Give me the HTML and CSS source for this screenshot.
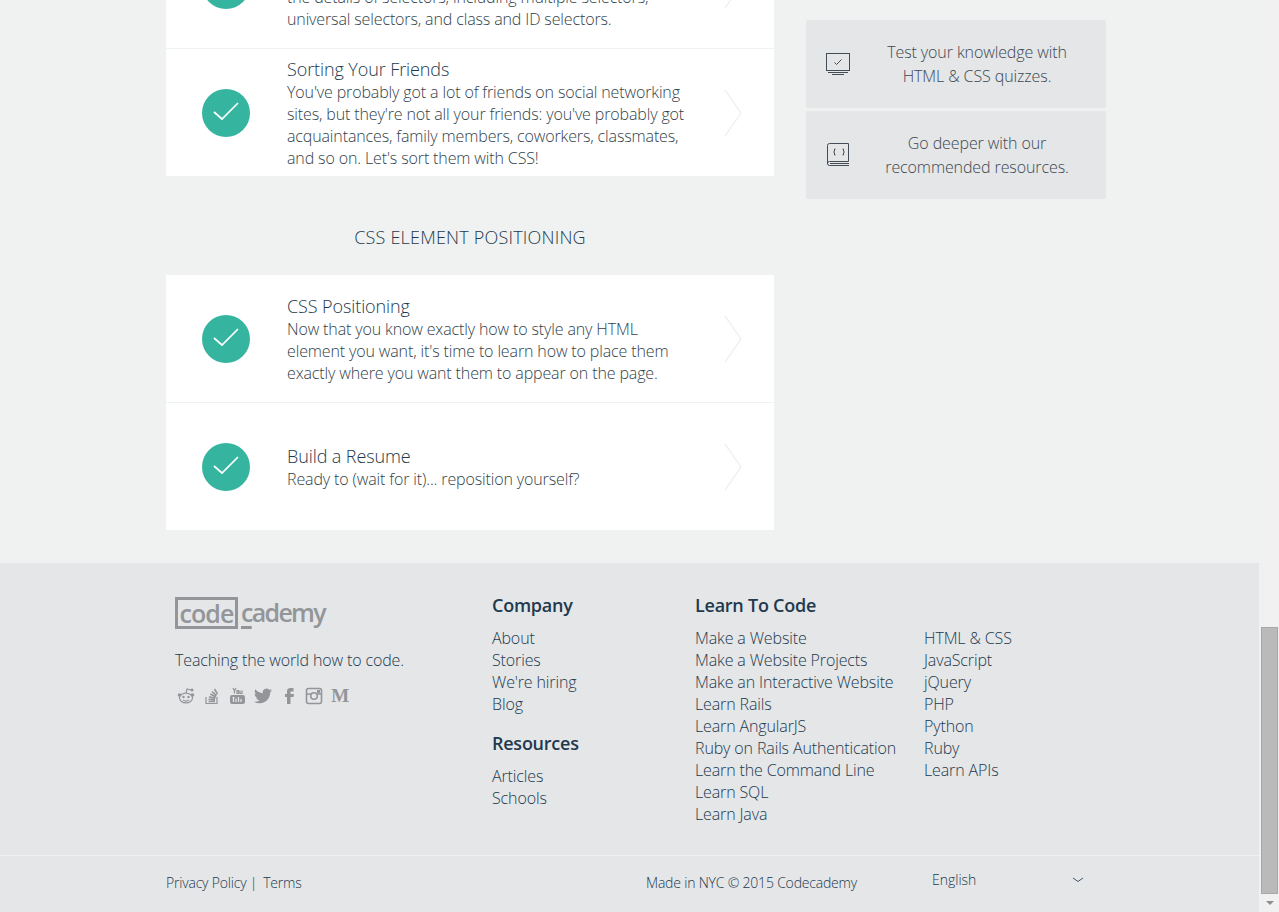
FILE: index.html
```html
<!DOCTYPE html>
<html lang="en">
<head>
    <meta charset="UTF-8">
    <meta name="viewport" content="width=device-width, initial-scale=1.0">
    <title>HTML &amp; CSS | Codecademy</title>
    <link rel="stylesheet" href="styles.css">
</head>
<body>

<div class="window">
    <div class="page">
        <div class="content">
            <div class="lessons">
                <div class="card">
                    <div class="lesson">
                        <span class="done"><svg viewBox="0 0 48 48"><path d="M12 23l8 7 16-16"/></svg></span>
                        <div class="lesson-text">
                            <h3>CSS Selectors</h3>
                            <p>Let's take a closer look at CSS and learn<br>the details of selectors, including multiple selectors,<br>universal selectors, and class and ID selectors.</p>
                        </div>
                        <svg class="chevron" viewBox="0 0 20 48"><path d="M2 1l16 23L2 47"/></svg>
                    </div>
                    <div class="lesson">
                        <span class="done"><svg viewBox="0 0 48 48"><path d="M12 23l8 7 16-16"/></svg></span>
                        <div class="lesson-text">
                            <h3>Sorting Your Friends</h3>
                            <p>You've probably got a lot of friends on social networking<br>sites, but they're not all your friends: you've probably got<br>acquaintances, family members, coworkers, classmates,<br>and so on. Let's sort them with CSS!</p>
                        </div>
                        <svg class="chevron" viewBox="0 0 20 48"><path d="M2 1l16 23L2 47"/></svg>
                    </div>
                </div>

                <h2>CSS ELEMENT POSITIONING</h2>

                <div class="card">
                    <div class="lesson">
                        <span class="done"><svg viewBox="0 0 48 48"><path d="M12 23l8 7 16-16"/></svg></span>
                        <div class="lesson-text">
                            <h3>CSS Positioning</h3>
                            <p>Now that you know exactly how to style any HTML<br>element you want, it's time to learn how to place them<br>exactly where you want them to appear on the page.</p>
                        </div>
                        <svg class="chevron" viewBox="0 0 20 48"><path d="M2 1l16 23L2 47"/></svg>
                    </div>
                    <div class="lesson">
                        <span class="done"><svg viewBox="0 0 48 48"><path d="M12 23l8 7 16-16"/></svg></span>
                        <div class="lesson-text">
                            <h3>Build a Resume</h3>
                            <p>Ready to (wait for it)... reposition yourself?</p>
                        </div>
                        <svg class="chevron" viewBox="0 0 20 48"><path d="M2 1l16 23L2 47"/></svg>
                    </div>
                </div>
            </div>

            <div class="sidebar">
                <a class="extra">
                    <svg class="extra-icon" viewBox="0 0 26 26">
                        <rect x="0.500" y="2.500" width="23" height="17"/>
                        <path d="M8.500 11.500l2 2 5-5"/>
                        <path d="M2 21.500h20M6 23.500h12"/>
                    </svg>
                    <span>Test your knowledge with<br>HTML &amp; CSS quizzes.</span>
                </a>
                <a class="extra">
                    <svg class="extra-icon" viewBox="0 0 26 26">
                        <path d="M1.500 22V3.500a2 2 0 0 1 2-2h19v18H3.500a2 2 0 0 0-2 2 2 2 0 0 0 2 2h19.500M4 21.500h19M4 23.500h19"/>
                        <path d="M9.500 7H8.500v2.300l-1 .7 1 .7V13h1M16.500 7h1v2.300l1 .7-1 .7V13h-1"/>
                    </svg>
                    <span>Go deeper with our<br>recommended resources.</span>
                </a>
            </div>
        </div>

        <footer class="footer">
            <div class="footer-main">
                <div class="brand">
                    <div class="logo"><span class="logo-box">code</span><span class="logo-rest"><u>c</u>ademy</span></div>
                    <p class="tagline">Teaching the world how to code.</p>
                    <div class="social">
                        <svg viewBox="0 0 18 18"><path class="line" d="M9 6l1-4 4 1"/><circle cx="15" cy="3" r="1.500"/><ellipse class="line" cx="9" cy="11" rx="6.500" ry="4.800"/><circle cx="2.500" cy="8" r="1.800"/><circle cx="15.500" cy="8" r="1.800"/><circle cx="6.500" cy="10" r="1.200"/><circle cx="11.500" cy="10" r="1.200"/><path class="line" d="M6 13.300c2 1 4 1 6 0"/></svg>
                        <svg viewBox="0 0 18 18"><path class="line" d="M3 10v6.500h11V10"/><path class="line wide" d="M5.500 14.500h6.500M5.500 12.300l6.500.6M6 9.800l6.300 1.600M7.300 7l5.700 3M9 4.500l4.500 4.200M11.500 2l3 5.200"/></svg>
                        <svg viewBox="0 0 18 18"><rect x="2" y="8" width="15" height="9" rx="2"/><path class="line cut" d="M4.500 10.500h2M5.500 10.500v4.500M8 11.500v3.500M10.500 10v5M13 12v3"/><path class="line" d="M5 1l1.500 3 1.500-3M6.500 4v2.500M9 3.500h1.500v3H9zM12 3.500v3h2v-3"/></svg>
                        <svg viewBox="0 0 24 24"><path d="M23.953 4.570a10 10 0 0 1-2.825.775 4.958 4.958 0 0 0 2.163-2.723c-.951.555-2.005.959-3.127 1.184a4.920 4.920 0 0 0-8.384 4.482C7.690 8.095 4.067 6.130 1.640 3.162a4.822 4.822 0 0 0-.666 2.475c0 1.710.870 3.213 2.188 4.096a4.904 4.904 0 0 1-2.228-.616v.060a4.923 4.923 0 0 0 3.946 4.827 4.996 4.996 0 0 1-2.212.085 4.936 4.936 0 0 0 4.604 3.417 9.867 9.867 0 0 1-6.102 2.105c-.390 0-.779-.023-1.170-.067a13.995 13.995 0 0 0 7.557 2.209c9.053 0 13.998-7.496 13.998-13.985 0-.210 0-.420-.015-.630A9.935 9.935 0 0 0 24 4.590z"/></svg>
                        <svg viewBox="0 0 18 18"><path d="M10.500 4.500h3V1h-3C8 1 7 2.500 7 4.500V7H5v3h2v7h3.500v-7h3l.5-3h-3.500V5c0-.3.200-.5.500-.5z"/></svg>
                        <svg viewBox="0 0 18 18"><rect class="line wide" x="1.500" y="1.500" width="15" height="15" rx="2"/><path class="line wide" d="M2 7h4M12 7h4"/><circle class="line wide" cx="9" cy="9" r="3.300"/><rect x="12" y="3" width="3" height="3"/></svg>
                        <span class="medium">M</span>
                    </div>
                </div>

                <div class="links-col">
                    <h4>Company</h4>
                    <ul>
                        <li>About</li>
                        <li>Stories</li>
                        <li>We're hiring</li>
                        <li>Blog</li>
                    </ul>
                    <h4 class="next">Resources</h4>
                    <ul>
                        <li>Articles</li>
                        <li>Schools</li>
                    </ul>
                </div>

                <div class="learn">
                    <h4>Learn To Code</h4>
                    <div class="learn-lists">
                        <ul>
                            <li>Make a Website</li>
                            <li>Make a Website Projects</li>
                            <li>Make an Interactive Website</li>
                            <li>Learn Rails</li>
                            <li>Learn AngularJS</li>
                            <li>Ruby on Rails Authentication</li>
                            <li>Learn the Command Line</li>
                            <li>Learn SQL</li>
                            <li>Learn Java</li>
                        </ul>
                        <ul>
                            <li>HTML &amp; CSS</li>
                            <li>JavaScript</li>
                            <li>jQuery</li>
                            <li>PHP</li>
                            <li>Python</li>
                            <li>Ruby</li>
                            <li>Learn APIs</li>
                        </ul>
                    </div>
                </div>
            </div>

            <div class="footer-bottom">
                <div class="legal">Privacy Policy |<span class="terms">Terms</span></div>
                <div class="made">Made in NYC &copy; 2015 Codecademy</div>
                <div class="lang">
                    <span>English</span>
                    <svg viewBox="0 0 12 6"><path d="M1 1l5 3.500L11 1"/></svg>
                </div>
            </div>
        </footer>
    </div>

    <div class="scrollbar">
        <div class="thumb"></div>
        <div class="arrow"></div>
    </div>
</div>

</body>
</html>
```

FILE: styles.css
```css
* {
    box-sizing: border-box;
}
html, body {
    height: 100%;
    margin: 0;
}
body {
    font-family: "Open Sans", "Noto Sans", sans-serif;
    font-weight: 300;
    font-size: 16px;
    line-height: 22px;
    letter-spacing: -0.13px;
    color: #22394d;
    background-color: #f0f2f1;
    overflow: hidden;
}
h2, h3, h4, p, ul {
    margin: 0;
    padding: 0;
    font-weight: 300;
}
ul {
    list-style: none;
}

/* window is scrolled to the very bottom, so the page hangs from the bottom edge */
.window {
    display: flex;
    height: 100vh;
}
.page {
    flex: 1;
    display: flex;
    flex-direction: column;
    justify-content: flex-end;
    overflow: hidden;
}
.scrollbar {
    width: 20px;
    flex-shrink: 0;
    background-color: #f1f1f1;
    display: flex;
    flex-direction: column;
    padding: 627px 1px 0 2px;
}
.thumb {
    height: 267px;
    background-color: #bababa;
    border: 1px solid #a8a8a8;
}
.arrow {
    align-self: center;
    margin-top: 7px;
    border-left: 4px solid transparent;
    border-right: 4px solid transparent;
    border-top: 4px solid #8f8f8f;
}

.content {
    display: flex;
    flex-shrink: 0;
    gap: 32px;
    padding: 0 0 33px 166px;
}
.lessons {
    width: 608px;
}
.lessons h2 {
    height: 99px;
    line-height: 122px;
    font-size: 18px;
    letter-spacing: 0.2px;
    text-align: center;
}
.card {
    background: #fff;
}
.lesson {
    display: flex;
    align-items: center;
    height: 127px;
    box-sizing: content-box;
    padding: 0 31px 0 36px;
}
.lesson + .lesson {
    border-top: 1px solid #f0f2f1;
}
.done {
    width: 48px;
    height: 48px;
    flex-shrink: 0;
    border-radius: 50%;
    background-color: #35b5a0;
}
.done svg {
    display: block;
    fill: none;
    stroke: #fff;
    stroke-width: 1.700;
}
.lesson-text {
    flex: 1;
    margin-left: 37px;
    padding-top: 2px;
}
.lesson-text h3 {
    font-size: 18px;
    line-height: 23px;
    letter-spacing: -0.1px;
}
.lesson-text p {
    color: #323f4a;
}
.chevron {
    width: 20px;
    height: 48px;
    fill: none;
    stroke: #f0f2f1;
    stroke-width: 1.500;
}

.sidebar {
    width: 300px;
    padding-top: 99px;
    display: flex;
    flex-direction: column;
    gap: 3px;
}
.extra {
    display: flex;
    align-items: center;
    height: 88px;
    padding: 0 4px 0 20px;
    background-color: #e4e6e8;
    border-radius: 2px;
    line-height: 24px;
    letter-spacing: -0.1px;
    color: #3d4852;
    text-align: center;
}
.extra span {
    flex: 1;
}
.extra-icon {
    width: 26px;
    height: 26px;
    fill: none;
    stroke: #444d55;
    stroke-width: 1;
}

.footer {
    flex-shrink: 0;
    background-color: #e4e6e8;
}
.footer-main {
    display: flex;
    height: 292px;
    padding: 31px 0 0 166px;
}
.footer h4 {
    font-size: 18px;
    font-weight: 600;
    line-height: 22px;
    letter-spacing: -0.25px;
    color: #22394d;
    margin-bottom: 11px;
}
.footer h4.next {
    margin-top: 17px;
}
.brand {
    width: 326px;
    padding-left: 9px;
}
.logo {
    display: flex;
    height: 32px;
    margin-top: 3px;
    font-size: 25px;
    font-weight: 600;
    letter-spacing: -0.900px;
    line-height: 26px;
    color: #939598;
}
.logo-box {
    width: 63px;
    height: 32px;
    border: 3px solid #939598;
    text-align: center;
}
.logo-rest {
    padding-left: 3px;
    line-height: 30px;
    letter-spacing: -1.700px;
}
.logo-rest u {
    text-decoration-thickness: 3px;
    text-underline-offset: 4px;
    text-decoration-skip-ink: none;
}
.tagline {
    margin-top: 20px;
}
.social {
    display: flex;
    align-items: center;
    gap: 7.700px;
    margin-top: 16px;
    padding-left: 2px;
    color: #939598;
}
.social svg {
    width: 18px;
    height: 18px;
    fill: #939598;
}
.social .line {
    fill: none;
    stroke: #939598;
    stroke-width: 1.200;
}
.social .wide {
    stroke-width: 1.600;
}
.social .cut {
    stroke: #e4e6e8;
}
.medium {
    width: 18px;
    font-family: "Liberation Serif", serif;
    font-size: 19px;
    font-weight: 700;
    line-height: 18px;
    text-align: center;
}
.links-col {
    width: 203px;
}
.learn-lists {
    display: flex;
}
.learn-lists ul:first-child {
    width: 229px;
}
.footer-bottom {
    display: flex;
    height: 57px;
    padding-left: 166px;
    border-top: 1px solid #f0f2f1;
    font-size: 14px;
    letter-spacing: -0.2px;
}
.legal {
    width: 480px;
    padding-top: 16px;
}
.terms {
    margin-left: 6px;
}
.made {
    width: 286px;
    padding-top: 16px;
}
.lang {
    display: flex;
    width: 152px;
    justify-content: space-between;
    align-items: flex-start;
    padding-top: 13px;
    letter-spacing: 0;
}
.lang svg {
    width: 12px;
    height: 6px;
    margin-top: 8px;
    fill: none;
    stroke: #44586a;
    stroke-width: 1;
}
```
